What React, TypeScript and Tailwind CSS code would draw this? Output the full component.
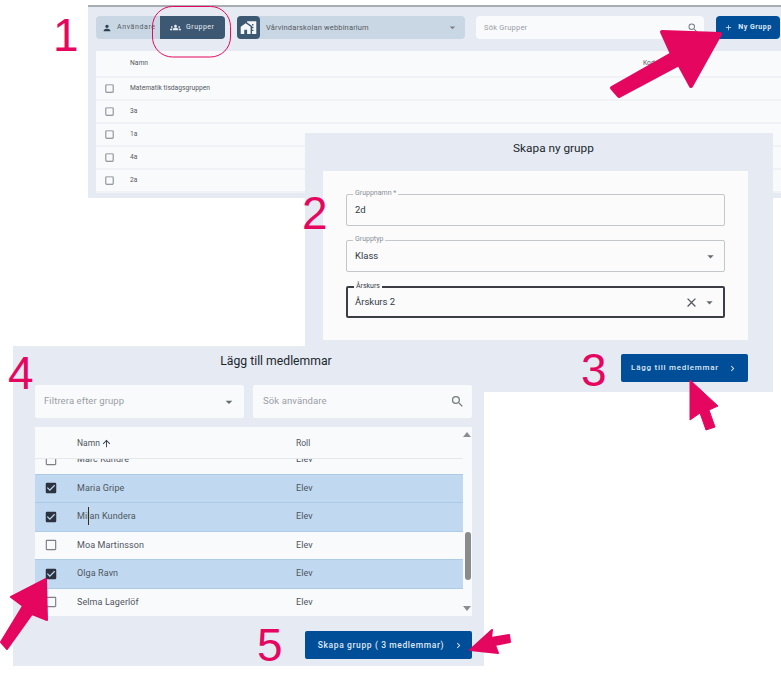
import {
  MdArrowDropDown,
  MdArrowUpward,
  MdCheckBox,
  MdCheckBoxOutlineBlank,
  MdChevronRight,
  MdClear,
  MdGroups,
  MdHomeWork,
  MdPerson,
  MdSearch,
  MdAdd,
} from "react-icons/md";

const GROUPS = ["Matematik tisdagsgruppen", "3a", "1a", "4a", "2a"];

const MEMBERS = [
  { name: "Marc Kundre", checked: false },
  { name: "Maria Gripe", checked: true },
  { name: "Milan Kundera", checked: true, caret: true },
  { name: "Moa Martinsson", checked: false },
  { name: "Olga Ravn", checked: true },
  { name: "Selma Lagerlöf", checked: false },
];

function Step({ n, className }: { n: string; className: string }) {
  return (
    <span className={`absolute z-30 text-[46px] leading-none text-[#e5065f] font-['Liberation_Sans',sans-serif] ${className}`}>
      {n}
    </span>
  );
}

// Utfälld etikett ovanpå ramen
function Field({ label, value, focused, clear, select }: { label: string; value: string; focused?: boolean; clear?: boolean; select?: boolean }) {
  return (
    <div className={`relative flex h-[32px] items-center rounded-[2px] pl-[8px] pr-[6px] text-[9.5px] text-[#333a45] ${focused ? "border-2 border-[#3b3f45]" : "border border-[#c4c6c9]"}`}>
      <span className={`absolute left-[6px] top-[-6px] bg-[#fbfbfc] px-[2px] text-[7px] leading-[9px] ${focused ? "text-[#333a45]" : "text-[#8a8f96]"}`}>
        {label}
      </span>
      <span className={`flex-1 ${focused ? "-ml-px" : ""}`}>{value}</span>
      {clear && <MdClear className="mr-[3px] text-[15px] text-[#555a60]" />}
      {select && <MdArrowDropDown className="text-[15px] text-[#666b72]" />}
    </div>
  );
}

function TopPanel() {
  return (
    <section className="absolute left-[88px] top-[5px] z-0 h-[193px] w-[693px] overflow-hidden border-t-2 border-[#a9acb0] bg-[#e6ebf3] pl-[8px] pt-[9px] text-[#555b63]">
      <div className="flex h-[23px] items-stretch pr-[1px] text-[7px]">
        <div className="flex w-[129px] rounded-[4px] bg-[#c9d7e4]">
          <div className="flex w-[64px] items-center gap-[5px] overflow-hidden whitespace-nowrap pl-[6px] tracking-[0.6px]">
            <MdPerson className="shrink-0 text-[10px] text-[#2f3f50]" />
            Användare
          </div>
          <div className="flex w-[65px] items-center gap-[5px] rounded-[0_4px_4px_0] bg-[#3d5873] pl-[10px] tracking-[0.5px] text-[#e8edf2]">
            <MdGroups className="text-[11px]" />
            Grupper
          </div>
        </div>
        <div className="ml-[12px] flex w-[228px] items-center rounded-[4px] bg-[#c9d7e4]">
          <div className="flex h-[23px] w-[23px] items-center justify-center rounded-[4px] bg-[#3d5873] text-[#f4f6f8]">
            <MdHomeWork className="text-[17px]" />
          </div>
          <span className="ml-[6px] flex-1 text-[7.5px] tracking-[0.15px]">Vårvindarskolan webbinarium</span>
          <MdArrowDropDown className="mr-[6px] text-[13px] text-[#7a8088]" />
        </div>
        <div className="ml-[11px] flex w-[228px] items-center rounded-[4px] bg-[#f9fafc] pl-[8px] pr-[5px] text-[7.5px] tracking-[0.2px] text-[#9a9ea5]">
          <span className="flex-1">Sök Grupper</span>
          <MdSearch className="text-[12px] text-[#777c83]" />
        </div>
        <div className="ml-[12px] flex w-[64px] items-center justify-center gap-[5px] rounded-[4px] bg-[#004e98] text-[7px] font-bold tracking-[0.5px] text-[#dfe8f2]">
          <MdAdd className="text-[9px]" />
          Ny Grupp
        </div>
      </div>
      <div className="mt-[12px] bg-[#f9fafc] text-[6.7px]">
        <div className="flex h-[27px] items-center border-b-2 border-[#f0f2f6] pl-[34px]">
          <span className="w-[513px]">Namn</span>
          <span>Kod</span>
        </div>
        {GROUPS.map((g) => (
          <div key={g} className="flex h-[23px] items-center border-b-2 border-[#f0f2f6] pl-[8px]">
            <MdCheckBoxOutlineBlank className="text-[11px] text-[#777c83]" />
            <span className="ml-[15px]">{g}</span>
          </div>
        ))}
      </div>
    </section>
  );
}

function CreatePanel() {
  return (
    <section className="absolute left-[305px] top-[133px] z-10 h-[259px] w-[468px] bg-[#e6ebf3] pl-[18px] pr-[25px]">
      <h2 className="flex h-[30px] items-center justify-center pl-[36px] pt-[2px] text-[11.8px] text-[#22272e]">Skapa ny grupp</h2>
      <div className="mt-[8px] flex h-[169px] flex-col gap-[14px] bg-[#fbfbfc] px-[23px] pt-[23px]">
        <Field label="Gruppnamn *" value="2d" />
        <Field label="Grupptyp" value="Klass" select />
        <Field label="Årskurs" value="Årskurs 2" focused clear select />
      </div>
      <div className="mt-[14px] flex justify-end">
        <button className="flex h-[28px] w-[127px] items-center justify-center gap-[8px] rounded-[2px] bg-[#004e98] text-[8px] font-medium tracking-[0.75px] text-[#dfe8f2]">
          Lägg till medlemmar
          <MdChevronRight className="text-[11px]" />
        </button>
      </div>
    </section>
  );
}

function MemberRow({ name, checked, caret }: { name: string; checked: boolean; caret?: boolean }) {
  return (
    <div className={`flex h-[28.5px] items-center border-b border-[#aecbe6] text-[9px] tracking-[0.1px] text-[#4f555d] first:-mt-[13px] ${checked ? "bg-[#c0d9f0]" : "bg-[#f9fafc]"}`}>
      {checked ? (
        <MdCheckBox className="ml-[9px] w-[14px] text-[14px] text-[#2b3340]" />
      ) : (
        <MdCheckBoxOutlineBlank className="ml-[9px] w-[14px] text-[14px] text-[#7d8187]" />
      )}
      <span className="relative ml-[19px] w-[219px]">
        {name}
        {caret && <span className="absolute left-[11px] top-[-3px] h-[18px] w-px bg-[#3a2a10]" />}
      </span>
      <span>Elev</span>
    </div>
  );
}

function MembersPanel() {
  return (
    <section className="absolute left-[13px] top-[346px] z-20 h-[320px] w-[471px] bg-[#e6ebf3] pl-[22px] pr-[12px]">
      <h2 className="flex h-[30px] items-center justify-center pl-[45px] text-[12.2px] text-[#22272e]">Lägg till medlemmar</h2>
      <div className="mt-[9px] flex h-[33px] gap-[9px] text-[9.5px] tracking-[0.1px] text-[#9a9ea5]">
        <div className="flex w-[209px] items-center rounded-[2px] bg-[#f9fafc] pl-[9px] pr-[7px]">
          <span className="flex-1">Filtrera efter grupp</span>
          <MdArrowDropDown className="text-[16px] text-[#666b72]" />
        </div>
        <div className="flex w-[219px] items-center rounded-[2px] bg-[#f9fafc] pl-[10px] pr-[7px]">
          <span className="flex-1">Sök användare</span>
          <MdSearch className="text-[15px] text-[#777c83]" />
        </div>
      </div>
      <div className="mt-[9px] flex h-[189px] w-[437px] bg-[#f9fafc]">
        <div className="w-[428px] overflow-hidden">
          <div className="relative z-10 flex h-[32px] items-center border-b border-[#e6e8ec] bg-[#f9fafc] pl-[42px] pt-[2px] text-[8.5px] text-[#4f555d]">
            <span className="flex w-[219px] items-center gap-[1px]">
              Namn <MdArrowUpward className="text-[11px] text-[#333a45]" />
            </span>
            <span>Roll</span>
          </div>
          <div>
            {MEMBERS.map((m) => (
              <MemberRow key={m.name} {...m} />
            ))}
          </div>
        </div>
        <div className="relative w-[9px]">
          <span className="absolute left-[0px] top-[5px] h-0 w-0 border-x-[4px] border-b-[5px] border-x-transparent border-b-[#8b8f94]" />
          <span className="absolute left-[2px] top-[105px] h-[48px] w-[6px] rounded-[3px] bg-[#8b8b8b]" />
          <span className="absolute bottom-[5px] left-[0px] h-0 w-0 border-x-[4px] border-t-[5px] border-x-transparent border-t-[#8b8f94]" />
        </div>
      </div>
      <div className="mt-[15px] flex w-[437px] justify-end">
        <button className="flex h-[28px] w-[167px] items-center justify-center gap-[9px] rounded-[2px] bg-[#004e98] pl-[5px] text-[8.5px] font-medium tracking-[0.6px] text-[#dfe8f2]">
          Skapa grupp ( 3 medlemmar)
          <MdChevronRight className="text-[11px]" />
        </button>
      </div>
    </section>
  );
}

// Markeringar ovanpå bilderna: ram och pilar
function Annotations() {
  return (
    <svg className="absolute left-0 top-0 z-30" width="781" height="677" viewBox="0 0 781 677">
      <rect x="152.5" y="6.5" width="78" height="50.5" rx="20" fill="none" stroke="#e5065f" strokeWidth="1" />
      <g fill="#e5065f" stroke="#e5065f" strokeLinejoin="round">
        <polygon strokeWidth="4" points="662,32 720,34 691,86 679,64 619,96 612,88 672,54" />
        <polygon strokeWidth="1" points="690,380 718,406 709,410 715,427 706,430 700,413 690,420" />
        <polygon strokeWidth="2" points="46,579 11,597 23,606 1,642 7,649 32,614 47,620" />
        <polygon strokeWidth="2" points="470,650 492,630 491,638 509,635 510,642 495,645 498,653" />
      </g>
    </svg>
  );
}

export default function App() {
  return (
    <main className="relative h-[677px] w-[781px] overflow-hidden bg-white font-['Roboto',sans-serif]">
      <TopPanel />
      <CreatePanel />
      <MembersPanel />
      <Annotations />
      <Step n="1" className="left-[53px] top-[12px]" />
      <Step n="2" className="left-[302px] top-[190px]" />
      <Step n="3" className="left-[581px] top-[347px]" />
      <Step n="4" className="left-[8px] top-[350px]" />
      <Step n="5" className="left-[257px] top-[622px]" />
    </main>
  );
}
